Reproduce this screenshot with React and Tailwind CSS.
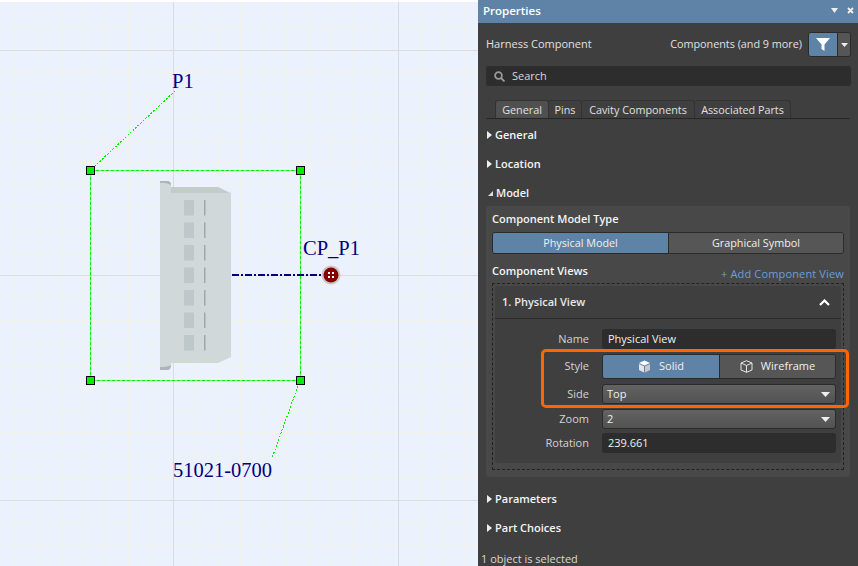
import React from 'react'

const font = { fontFamily: '"Open Sans", "Noto Sans", sans-serif' }

function Canvas() {
  return (
    <div className="w-[478px] h-full relative bg-[#ebf2fd] shrink-0 overflow-hidden">
      <svg width="478" height="566" className="block">
        <rect width="478" height="2" fill="#fff" />
        {Array.from({ length: 22 }, (_, i) => (
          <line key={'v' + i} x1={15.5 + i * 22.5} x2={15.5 + i * 22.5} y1="2" y2="566" stroke="#f2f2e8" shapeRendering="crispEdges" />
        ))}
        {Array.from({ length: 26 }, (_, i) => (
          <line key={'h' + i} y1={27.5 + i * 22.5} y2={27.5 + i * 22.5} x1="0" x2="478" stroke="#f2f2e8" shapeRendering="crispEdges" />
        ))}
        <line x1="173.5" x2="173.5" y1="2" y2="566" stroke="#d8dce0" />
        <line x1="398.5" x2="398.5" y1="2" y2="566" stroke="#d8dce0" />
        <line y1="50.5" y2="50.5" x1="0" x2="478" stroke="#dedcd6" />
        <line y1="275.5" y2="275.5" x1="0" x2="478" stroke="#dedcd6" />
        <line y1="500.5" y2="500.5" x1="0" x2="478" stroke="#dedcd6" />

        {/* connector body */}
        <path d="M160 181 H167 Q171 181 171 186 V187 H218 L231 193 V357 L218 363 H171 V365 Q171 370 167 370 H160z" fill="#d0d8d9" />
        <path d="M160 181 H167 Q171 181 171 185 Q165 182 160 183z" fill="#aeb3b5" />
        <path d="M160 370 H167 Q171 370 171 365 Q168 367 160 367z" fill="#aeb3b5" />
        <path d="M171 187 H218 L229 193 H171z" fill="#c3cccd" />
        {[0, 1, 2, 3, 4, 5, 6].map(i => (
          <g key={i}>
            <rect x="184" y={200 + i * 22.5} width="10" height="15.500" fill="#bec8ca" />
            <rect x="204" y={200 + i * 22.5} width="1.500" height="15.500" fill="#a0a8aa" />
          </g>
        ))}

        {/* selection */}
        <rect x="90.500" y="170.500" width="210" height="210" fill="none" stroke="#00f000" strokeDasharray="4 1" />
        <line x1="175" y1="91" x2="95" y2="166" stroke="#00f000" strokeDasharray="2 1.500" shapeRendering="crispEdges" />
        <line x1="298" y1="386" x2="272" y2="458" stroke="#00f000" strokeDasharray="2 1.500" shapeRendering="crispEdges" />
        {[[90, 170], [300, 170], [90, 380], [300, 380]].map(([x, y]) => (
          <rect key={x + '-' + y} x={x - 3.500} y={y - 3.500} width="8" height="8" fill="#00ee00" stroke="#000" />
        ))}

        {/* cavity pin */}
        <line x1="232" x2="324" y1="275" y2="275" stroke="#00007f" strokeWidth="2" strokeDasharray="7 2 2 2" />
        <circle cx="331" cy="275" r="9.500" fill="#c9c6c6" />
        <circle cx="331" cy="275" r="7.500" fill="#860000" />
        {[[328, 272], [332, 272], [328, 276], [332, 276]].map(([x, y]) => (
          <rect key={x + '-' + y} x={x} y={y} width="2" height="2" fill="#fff" />
        ))}
      </svg>
      <Label x="left-[172px]" y="top-[69px]">P1</Label>
      <Label x="left-[303px]" y="top-[236px]">CP_P1</Label>
      <Label x="left-[173px]" y="top-[458px]">51021-0700</Label>
    </div>
  )
}

function Label({ x, y, children }) {
  return (
    <span className={`absolute ${x} ${y} text-[20.500px] leading-6 text-[#00007f] whitespace-nowrap`} style={{ fontFamily: '"Liberation Serif", serif' }}>
      {children}
    </span>
  )
}

function Tri({ open }) {
  return open ? (
    <svg width="6" height="6" className="shrink-0"><path d="M6 1V6H1z" fill="#ddd" /></svg>
  ) : (
    <svg width="5" height="8" className="shrink-0"><path d="M0 0L5 4L0 8z" fill="#eee" /></svg>
  )
}

function Section({ label, open, className }) {
  return (
    <div className={`flex items-center gap-[3px] pl-[9px] h-[18px] font-semibold text-[11px] text-[#f4f4f4] ${className}`}>
      <Tri open={open} />
      <span>{label}</span>
    </div>
  )
}

function Caret() {
  return <svg width="9" height="5"><path d="M0 0H9L4.500 5z" fill="#eee" /></svg>
}

function Row({ label, children, className }) {
  return (
    <div className={`flex items-center ${className}`}>
      <span className="w-[94px] text-right text-[11px] text-[#d4d4d4] mr-[13px]">{label}</span>
      {children}
    </div>
  )
}

function Dropdown({ value }) {
  return (
    <div className="w-[234px] h-[20px] rounded-[3px] border border-[#2b2b2b] bg-gradient-to-b from-[#636363] to-[#525252] flex items-center justify-between pl-[4px] pr-[5px] text-[11px] text-[#f0f0f0]">
      {value}
      <Caret />
    </div>
  )
}

function Input({ value }) {
  return (
    <div className="w-[234px] h-[20px] rounded-[3px] bg-[#2d2d2d] flex items-center pl-[6px] text-[11px] text-[#f0f0f0]">{value}</div>
  )
}

function Panel() {
  return (
    <div className="flex-1 h-full relative bg-[#3f3f3f] text-[#e6e6e6] overflow-hidden" style={font}>
      <div className="h-[23px] pb-[2px] bg-[#5f83a6] flex items-center justify-between pl-[5px] pr-[4px]">
        <span className="text-[11.500px] font-semibold text-white">Properties</span>
        <div className="flex items-center gap-[9px]">
          <svg width="7" height="5"><path d="M0 0H7L3.500 5z" fill="#eee" /></svg>
          <svg width="7" height="7"><path d="M1 1L6 6M6 1L1 6" stroke="#eee" strokeWidth="1.800" /></svg>
        </div>
      </div>

      <div className="flex items-center justify-between h-[25px] mt-[9px] pl-[8px] pr-[7px] text-[11px] text-[#e0e0e0]">
        <span>Harness Component</span>
        <div className="flex items-center gap-[6px]">
          <span className="text-[10.800px]">Components (and 9 more)</span>
          <div className="flex w-[43px] h-[25px] rounded-[3px] border border-[#2b2b2b] overflow-hidden">
            <div className="w-[28px] bg-[#5f83a6] flex items-center justify-center">
              <svg width="14" height="13"><path d="M0 0H14L8.500 6.500V13L5.500 11V6.500z" fill="#fff" /></svg>
            </div>
            <div className="flex-1 bg-[#565656] border-l border-[#2b2b2b] flex items-center justify-center">
              <svg width="7" height="4"><path d="M0 0H7L3.500 4z" fill="#eee" /></svg>
            </div>
          </div>
        </div>
      </div>

      <div className="mx-[8px] mt-[9px] w-[365px] h-[20px] rounded-[3px] bg-[#2d2d2d] flex items-center pl-[8px] gap-[7px] text-[11px] text-[#d8d8d8]">
        <svg width="11" height="11" viewBox="0 0 11 11" fill="none" stroke="#9a9a9a" strokeWidth="1.800">
          <circle cx="4.500" cy="4.500" r="3.400" />
          <path d="M7 7L10.500 10.500" />
        </svg>
        Search
      </div>

      <div className="mx-[8px] mt-[14px] w-[364px] h-[19px] border-b border-[#262626] pl-[9px] flex text-[10.800px] text-[#e0e0e0]">
        <div className="w-[54px] h-[18px] pt-[1px] bg-[#505050] border border-b-0 border-[#333] rounded-t-[3px] flex items-center justify-center">General</div>
        <div className="w-[33px] h-[18px] pt-[1px] border border-b-0 border-l-0 border-[#333] rounded-t-[3px] flex items-center justify-center">Pins</div>
        <div className="w-[113px] h-[18px] pt-[1px] border border-b-0 border-l-0 border-[#333] rounded-t-[3px] flex items-center justify-center">Cavity Components</div>
        <div className="w-[96px] h-[18px] pt-[1px] border border-b-0 border-l-0 border-[#333] rounded-t-[3px] flex items-center justify-center">Associated Parts</div>
      </div>

      <Section label="General" className="mt-[7px]" />
      <Section label="Location" className="mt-[11px]" />
      <Section label="Model" open className="mt-[11px]" />

      <div className="mx-[8px] mt-[4px] w-[364px] h-[271px] rounded-[3px] bg-[#484848] px-[6px] pt-[5px]">
        <div className="h-[16px] flex items-center text-[11px] font-semibold text-[#f4f4f4]">Component Model Type</div>
        <div className="mt-[5px] flex h-[22px] rounded-[3px] border border-[#2b2b2b] overflow-hidden text-[10.800px] text-[#f0f0f0]">
          <div className="w-[176px] bg-[#5f83a6] border-r border-[#2b2b2b] flex items-center justify-center">Physical Model</div>
          <div className="flex-1 bg-[#565656] flex items-center justify-center">Graphical Symbol</div>
        </div>
        <div className="mt-[9px] flex justify-between h-[19px]">
          <span className="text-[11px] font-semibold text-[#f4f4f4] leading-[16px]">Component Views</span>
          <span className="text-[11px] tracking-[0.15px] text-[#6a9fd8] leading-[16px] mt-[3px]">+ Add Component View</span>
        </div>
        <div className="mt-[1px] h-[187px] border border-dashed border-[#222] px-[2px] pt-[2px]">
          <div className="h-[177px] rounded-[3px] bg-[#3f3f3f]">
            <div className="h-[33px] border-b border-[#2b2b2b] flex items-center justify-between pl-[7px] pr-[11px] text-[11px] font-semibold text-[#e8e8e8]">
              1. Physical View
              <svg width="11" height="7" fill="none" stroke="#fff" strokeWidth="2.200"><path d="M1 6L5.500 1.500L10 6" /></svg>
            </div>
            <Row label="Name" className="mt-[10px]"><Input value="Physical View" /></Row>
            <Row label="Style" className="mt-[5px]">
              <div className="w-[234px] h-[25px] flex rounded-[3px] border border-[#2b2b2b] overflow-hidden text-[11px] text-[#f0f0f0]">
                <div className="w-[117px] bg-[#5f83a6] border-r border-[#2b2b2b] flex items-center justify-center gap-[8px]">
                  <svg width="13" height="13" viewBox="0 0 13 13"><path d="M6.500 0.500L12 3L6.500 5.500L1 3z" fill="#fff" /><path d="M1 4L6 6.300V12.500L1 10z" fill="#e4e4e4" /><path d="M12 4L7 6.300V12.500L12 10z" fill="#c8c8c8" /></svg>
                  Solid
                </div>
                <div className="flex-1 bg-[#565656] flex items-center justify-center gap-[8px]">
                  <svg width="13" height="13" viewBox="0 0 13 13" fill="none" stroke="#e6e6e6"><path d="M6.500 0.700L12 3V10L6.500 12.300L1 10V3zM1 3L6.500 5.500L12 3M6.500 5.500V12.300" /></svg>
                  Wireframe
                </div>
              </div>
            </Row>
            <Row label="Side" className="mt-[5px]"><Dropdown value="Top" /></Row>
            <Row label="Zoom" className="mt-[5px]"><Dropdown value="2" /></Row>
            <Row label="Rotation" className="mt-[4px]"><Input value="239.661" /></Row>
          </div>
        </div>
      </div>

      <Section label="Parameters" className="mt-[13px]" />
      <Section label="Part Choices" className="mt-[11px]" />
      <div className="absolute left-[3px] top-[551px] text-[11px] leading-[15px] text-[#d8d8d8]">1 object is selected</div>

      {/* orange callout */}
      <div className="absolute left-[63px] top-[349px] w-[308px] h-[59px] border-[3px] border-[#ff6600] rounded-[5px]" />
    </div>
  )
}

export default function App() {
  return (
    <div className="w-[858px] h-[566px] flex overflow-hidden">
      <Canvas />
      <Panel />
    </div>
  )
}
